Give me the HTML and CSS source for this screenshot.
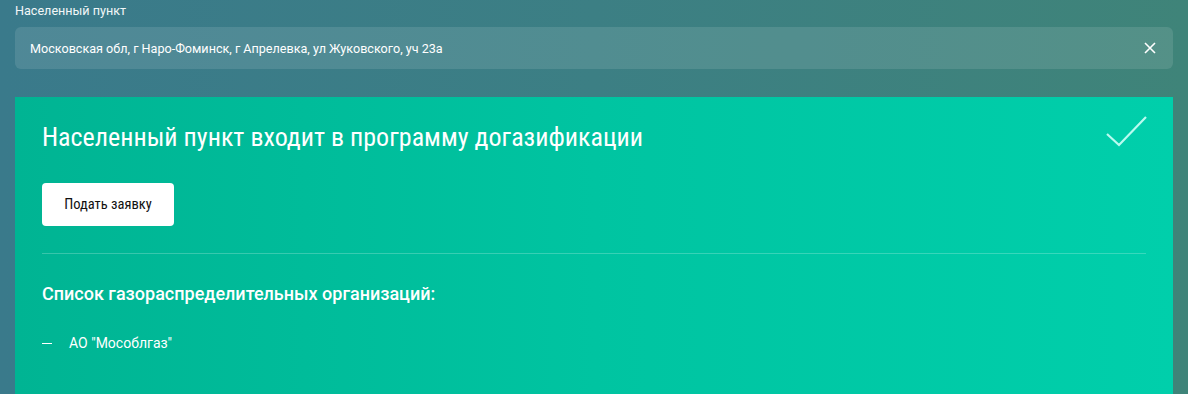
FILE: index.html
```html
<!DOCTYPE html>
<html lang="ru">
<head>
<meta charset="utf-8">
<link rel="stylesheet" href="styles.css">
</head>
<body>
<div class="page">
  <div class="field">
    <div class="field-label">Населенный пункт</div>
    <div class="field-box">
      <span class="field-value">Московская обл, г Наро-Фоминск, г Апрелевка, ул Жуковского, уч 23а</span>
      <svg class="clear" width="12" height="12" viewBox="0 0 12 12"><path d="M1 1 L11 11 M11 1 L1 11" stroke="#fff" stroke-width="1.6" fill="none"/></svg>
    </div>
  </div>
  <div class="card">
    <div class="card-head">
      <h1 class="card-title">Населенный пункт входит в программу догазификации</h1>
      <svg class="check" width="42" height="32" viewBox="0 0 42 32"><path d="M1 18 L13 29 L40 1" stroke="#b9fbf0" stroke-width="2.2" fill="none"/></svg>
    </div>
    <button class="btn">Подать заявку</button>
    <div class="divider"></div>
    <h2 class="orgs-title">Список газораспределительных организаций:</h2>
    <ul class="orgs">
      <li class="org"><span class="dash"></span>АО "Мособлгаз"</li>
    </ul>
  </div>
</div>
</body>
</html>
```

FILE: styles.css
```css
html, body {
  margin: 0;
  padding: 0;
  height: 100%;
}
body {
  background: linear-gradient(90deg, #3a7a8b 0%, #3c7f84 50%, #3f8479 100%);
  font-family: Roboto, "Liberation Sans", sans-serif;
  color: #fff;
  overflow: hidden;
}
.page {
  padding: 0 15px;
}
.field-label {
  font-size: 12.6px;
  line-height: 16px;
  padding-top: 3px;
  color: #f2f7f8;
}
.field-box {
  margin-top: 8px;
  height: 42px;
  border-radius: 6px;
  background: rgba(255, 255, 255, 0.11);
  display: flex;
  align-items: center;
  justify-content: space-between;
  padding: 0 17px 0 15px;
}
.field-value {
  font-size: 12.6px;
  color: #fff;
}
.clear {
  display: block;
}
.card {
  margin-top: 28px;
  background: linear-gradient(90deg, #00b493 0%, #00c4a1 50%, #00cfab 100%);
  padding: 24px 27px 30px 27px;
  min-height: 250px;
}
.card-head {
  display: flex;
  justify-content: space-between;
  align-items: flex-start;
}
.card-title {
  margin: -1px 0 0 0;
  font-family: "Liberation Sans Narrow", "Roboto Condensed", "DejaVu Sans Condensed", sans-serif;
  font-stretch: condensed;
  font-weight: 400;
  font-size: 26px;
  line-height: 34px;
  color: #fff;
}
.check {
  display: block;
  margin-right: -2px;
  margin-top: -5px;
}
.btn {
  margin-top: 29px;
  width: 132px;
  height: 43px;
  border: 0;
  border-radius: 4px;
  background: #fff;
  color: #111;
  font-family: "Liberation Sans Narrow", "Roboto Condensed", sans-serif;
  font-stretch: condensed;
  font-size: 14.5px;
  cursor: pointer;
  display: block;
}
.divider {
  margin-top: 27px;
  height: 1px;
  background: rgba(255, 255, 255, 0.22);
}
.orgs-title {
  margin: 29px 0 0 0;
  font-size: 18px;
  font-weight: 500;
  line-height: 22px;
  color: #fff;
}
.orgs {
  list-style: none;
  margin: 29px 0 0 0;
  padding: 0;
}
.org {
  display: flex;
  align-items: center;
  font-size: 14px;
  line-height: 18px;
}
.dash {
  display: inline-block;
  width: 10px;
  height: 1px;
  background: #fff;
  margin-right: 17px;
}
```
